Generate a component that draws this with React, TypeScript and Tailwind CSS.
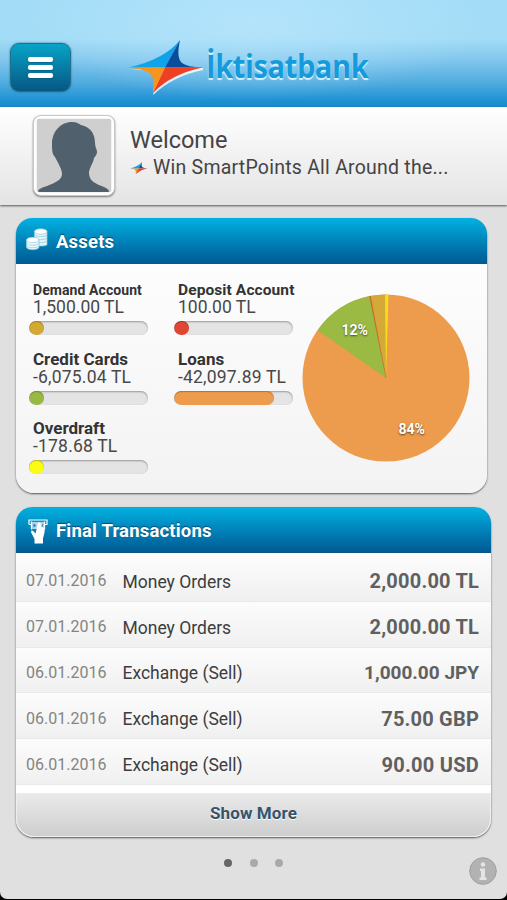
import type { ReactNode } from "react";

function Star({ className }: { className: string }) {
  return (
    <svg viewBox="0 0 76 56" className={className}>
      <path d="M1 29 Q22 29 24 36 Q26 44 24 55 Q44 36 74 30 L74 28 Z" fill="#fff" opacity=".8" />
      <path d="M0 27.500 Q36 19 51 0 L36 27.500 Z" fill="#0fa4e9" />
      <path d="M51 0 Q47 18 53 23 Q58 27 74 27.500 L36 27.500 Z" fill="#0b4d9c" />
      <path d="M0 27.500 L36 27.500 L24 53 Q25 41 23 36 Q20 30 0 27.500 Z" fill="#f7941d" />
      <path d="M36 27.500 L74 27.500 Q42 34 24 53 Z" fill="#ee4023" />
    </svg>
  );
}

function CoinsIcon() {
  return (
    <svg viewBox="0 0 22 23" className="-mt-[3px] h-[23px] w-[22px]">
      <g stroke="#8ccbe2" strokeWidth=".7">
        <path d="M8.500 3.500v13c0 2 12.500 2 12.500 0v-13z" fill="#e4f3f8" />
        <path d="M8.500 7c0 2 12.500 2 12.500 0M8.500 10c0 2 12.500 2 12.500 0M8.500 13c0 2 12.500 2 12.500 0" fill="none" />
        <ellipse cx="14.750" cy="3.500" rx="6.250" ry="2.700" fill="#fff" />
        <path d="M.5 12v7c0 3.500 12.500 3.500 12.500 0v-7z" fill="#eef8fb" />
        <path d="M.5 15c0 3 12.500 3 12.500 0M.5 17.500c0 3 12.500 3 12.500 0" fill="none" />
        <ellipse cx="6.750" cy="12" rx="6.250" ry="2.700" fill="#fff" />
      </g>
    </svg>
  );
}

function CashIcon() {
  return (
    <svg viewBox="0 0 20 25" className="mt-[3px] ml-[2px] h-[25px] w-5">
      <path d="M1 5.500V1h18v4.500h-2M1 5.500h2" fill="none" stroke="#fff" strokeWidth="1.200" />
      <path d="M3.500 2.500v8M16.500 2.500v8" stroke="#fff" strokeWidth="1.300" />
      <path d="M4 3h12v7H4z" fill="#a9d6ea" />
      <path d="M5.500 4.500l2.500 2-2.500 2zM14.800 4.500l-1 2 1 2z" fill="#1c7fb2" />
      <path d="M9.800 4.500c0-1.400 3-1.400 3 0l.2 3.500c2.800 0 4 1 3.600 5l-1.600 6.500V24.500H6.500V20l-3.300-6.500c-.7-1.800 1.200-2.600 2.200-1.300l2.200 2.300z" fill="#fff" />
    </svg>
  );
}

function CardHeader({ icon, title }: { icon: ReactNode; title: string }) {
  return (
    <div className="flex h-[46px] shrink-0 items-center rounded-t-[16px] border-b border-[#0a5689] bg-linear-to-b from-[#04b1e2] to-[#015a94] pl-[10px]">
      <div className="w-[30px]">{icon}</div>
      <h2 className="pt-1 text-[18.500px] font-bold tracking-[0.18px] text-white [text-shadow:0_-1px_1px_#07466d]">{title}</h2>
    </div>
  );
}

type AccountProps = { name: string; amount: string; width: string; color: string; nameClass: string; amountClass: string };

function Account({ name, amount, width, color, nameClass, amountClass }: AccountProps) {
  return (
    <div className="h-[69.500px] w-[120px]">
      <div className={`pl-1 font-bold whitespace-nowrap text-[#333] ${nameClass}`}>{name}</div>
      <div className={`pl-1 leading-[17px] whitespace-nowrap text-[#484848] ${amountClass}`}>{amount}</div>
      <div className="mt-[5px] h-[14px] w-[119px] overflow-hidden rounded-full bg-[#e4e4e4] shadow-[inset_0_1px_2px_#999]">
        <div className={`h-full rounded-full shadow-[inset_0_1px_1px_#0004] ${width} ${color}`} />
      </div>
    </div>
  );
}

const leftAccounts: AccountProps[] = [
  { name: "Demand Account", amount: "1,500.00 TL", width: "w-[15px]", color: "bg-[#d2a933]", nameClass: "text-[14px] leading-[17px] tracking-[0.08px]", amountClass: "text-[17.500px]" },
  { name: "Credit Cards", amount: "-6,075.04 TL", width: "w-[15px]", color: "bg-[#98b942]", nameClass: "pb-[2px] text-[17px] leading-[15px]", amountClass: "text-[17.500px] tracking-[0.2px]" },
  { name: "Overdraft", amount: "-178.68 TL", width: "w-[15px]", color: "bg-[#fcfc12]", nameClass: "pb-[2px] text-[17px] leading-[15px]", amountClass: "text-[17.500px] tracking-[0.2px]" },
];

const rightAccounts: AccountProps[] = [
  { name: "Deposit Account", amount: "100.00 TL", width: "w-[15px]", color: "bg-[#df4734]", nameClass: "text-[15.500px] leading-[17px] tracking-[0.1px]", amountClass: "text-[17.500px]" },
  { name: "Loans", amount: "-42,097.89 TL", width: "w-[100px]", color: "bg-[#ed9b4c]", nameClass: "pb-[2px] text-[17px] leading-[15px]", amountClass: "text-[17.500px] tracking-[0.2px]" },
];

const transactions = [
  { date: "07.01.2016", type: "Money Orders", amount: "2,000.00 TL", amountClass: "text-[20px] tracking-[0.2px]" },
  { date: "07.01.2016", type: "Money Orders", amount: "2,000.00 TL", amountClass: "text-[20px] tracking-[0.2px]" },
  { date: "06.01.2016", type: "Exchange (Sell)", amount: "1,000.00 JPY", amountClass: "text-[19px]" },
  { date: "06.01.2016", type: "Exchange (Sell)", amount: "75.00 GBP", amountClass: "text-[20px] tracking-[0.2px]" },
  { date: "06.01.2016", type: "Exchange (Sell)", amount: "90.00 USD", amountClass: "text-[20px] tracking-[0.25px]" },
];

function Pie() {
  return (
    <svg viewBox="0 0 168 168" className="mt-[30px] ml-[7px] h-[168px] w-[168px] shrink-0">
      <circle cx="84" cy="84" r="83.500" fill="#ed9b4c" />
      <path d="M84 84L15.500 36.200A83.500 83.500 0 0 1 68 2Z" fill="#9bba43" />
      <path d="M84 84L68 2A83.500 83.500 0 0 1 83.500 .5Z" fill="#d4a937" />
      <path d="M84 84L67.500 2.200L68.500 2Z" fill="#c9642e" stroke="#c9642e" strokeWidth=".3" />
      <path d="M84 84L83 .5A83.500 83.500 0 0 1 86.500 .6Z" fill="#f6df16" />
      <g fill="#fff" fontFamily="Roboto, sans-serif" fontSize="14" fontWeight="700" className="[text-shadow:0_1px_2px_#0009]">
        <text x="39.500" y="41" textLength="26.500" lengthAdjust="spacingAndGlyphs">12%</text>
        <text x="96.500" y="140" textLength="26.500" lengthAdjust="spacingAndGlyphs">84%</text>
      </g>
    </svg>
  );
}

export default function App() {
  return (
    <div className="h-[900px] w-[507px] bg-black font-['Roboto',sans-serif]">
      <div className="flex h-[899px] flex-col overflow-hidden rounded-b-[7px] bg-[#e0e0e0]">
        <header className="flex h-[107px] shrink-0 items-start bg-[radial-gradient(ellipse_at_50%_20%,#bfe9ff99,transparent_65%),linear-gradient(180deg,#a3dcf8_0%,#a3dcf6_36%,#84c8ed_55%,#4eabdf_78%,#1c90d2_95%,#1889c9_100%)] pt-[42px] pl-[10px]">
          <button className="mt-px flex h-[49px] w-[61px] flex-col items-center justify-center gap-[3px] rounded-[9px] border border-[#21708f] bg-linear-to-b from-[#08a4c7] to-[#065884] shadow-[0_0_2px_#17698a]">
            <span className="h-[5px] w-[25px] rounded-[2px] bg-white shadow-[0_1px_1px_#0456]" />
            <span className="h-[5px] w-[25px] rounded-[2px] bg-white shadow-[0_1px_1px_#0456]" />
            <span className="h-[5px] w-[25px] rounded-[2px] bg-white shadow-[0_1px_1px_#0456]" />
          </button>
          <Star className="-mt-[2px] ml-[58px] h-[56px] w-[76px]" />
          <div className="mt-[3px] ml-px origin-left scale-x-[0.905] font-['Open_Sans',sans-serif] text-[32px] leading-[42px] font-bold tracking-[-0.4px] text-[#159bdc] [text-shadow:0_2px_1px_#d9f3ff]">İktisatbank</div>
        </header>

        <section className="flex h-[98px] shrink-0 bg-linear-to-b from-white to-[#e4e4e4] pt-[8px] pl-[33px] shadow-[0_1px_2px_#555]">
          <div className="h-[81px] w-[82px] rounded-[8px] border border-[#c8c8c8] bg-white p-[3px] shadow-[0_1px_2px_#777]">
            <svg viewBox="0 0 74 73" className="h-[73px] w-[74px] rounded-[3px] bg-[#cfcfcf] shadow-[0_0_1px_#888]">
              <path d="M1 73C1 70 4 69 10 67C20 63 25 60 25 55C25 50 20 42 18 38C15 35 15 30 15 25C15 12 24 3 35 3C39 3 41 4 44 6C53 8 58 14 58 24C58 28 60 30 60 33C60 36 58 37 57 39C56 45 52 49 52 54C52 62 59 65 67 68C71 70 72 71 72 73Z" fill="#51606d" />
            </svg>
          </div>
          <div className="ml-[15px] pt-[11px] text-[#444]">
            <h1 className="text-[23.500px] leading-[29px]">Welcome</h1>
            <div className="flex items-center text-[19.500px] leading-[26px] tracking-[0.23px] whitespace-nowrap">
              <Star className="mr-[5px] h-[13px] w-[18px]" />
              <span>Win SmartPoints All Around the...</span>
            </div>
          </div>
        </section>

        <section className="mt-[13px] ml-4 h-[275px] w-[471px] shrink-0 rounded-[18px] bg-linear-to-b from-white via-[#f9f9f9] to-[#f3f3f3] shadow-[0_1px_2px_#555]">
          <CardHeader icon={<CoinsIcon />} title="Assets" />
          <div className="flex pl-[13px]">
            <div className="w-[145px] pt-[18px]">
              {leftAccounts.map((a) => <Account key={a.name} {...a} />)}
            </div>
            <div className="w-[121px] pt-[18px]">
              {rightAccounts.map((a) => <Account key={a.name} {...a} />)}
            </div>
            <Pie />
          </div>
        </section>

        <section className="mt-[14px] ml-4 flex h-[330px] w-[475px] shrink-0 flex-col rounded-[18px] bg-white shadow-[0_1px_2px_#555]">
          <CardHeader icon={<CashIcon />} title="Final Transactions" />
          <div className="pt-[3px]">
            {transactions.map((t, i) => (
              <div key={i} className="flex h-[45.800px] items-center border-b border-[#e9e9e9] bg-linear-to-b from-[#fcfcfc] to-[#f0f0f0] pt-[6px] pr-[12px] pl-[10px]">
                <span className="w-[96.500px] text-[16px] text-[#848484]">{t.date}</span>
                <span className="pt-px text-[17.500px] text-[#3d3d3d]">{t.type}</span>
                <span className={`ml-auto font-bold text-[#606060] ${t.amountClass}`}>{t.amount}</span>
              </div>
            ))}
          </div>
          <button className="mt-auto h-[44px] w-full rounded-b-[18px] border border-t-0 border-[#eee] bg-linear-to-b from-[#ebebeb] to-[#cecece] pb-[2px] text-[17px] font-bold tracking-[0.1px] text-[#34546d] [text-shadow:0_1px_0_#fff]">Show More</button>
        </section>

        <footer className="flex flex-1 items-start">
          <div className="mt-[22px] ml-[224px] flex gap-[17.500px]">
            <span className="size-[8px] rounded-full bg-[#666]" />
            <span className="size-[8px] rounded-full bg-[#a9a9a9]" />
            <span className="size-[8px] rounded-full bg-[#a9a9a9]" />
          </div>
          <svg viewBox="0 0 28 28" className="mt-[20px] mr-[10px] ml-auto size-7">
            <circle cx="14" cy="14" r="13.300" fill="#b2b2b2" stroke="#a0a0a0" />
            <circle cx="14" cy="7.500" r="2.200" fill="#e4e4e4" />
            <path d="M11 11.500h5v9h1.500V23H10.500v-2.500H12v-6.500h-1z" fill="#e4e4e4" />
          </svg>
        </footer>
      </div>
    </div>
  );
}
